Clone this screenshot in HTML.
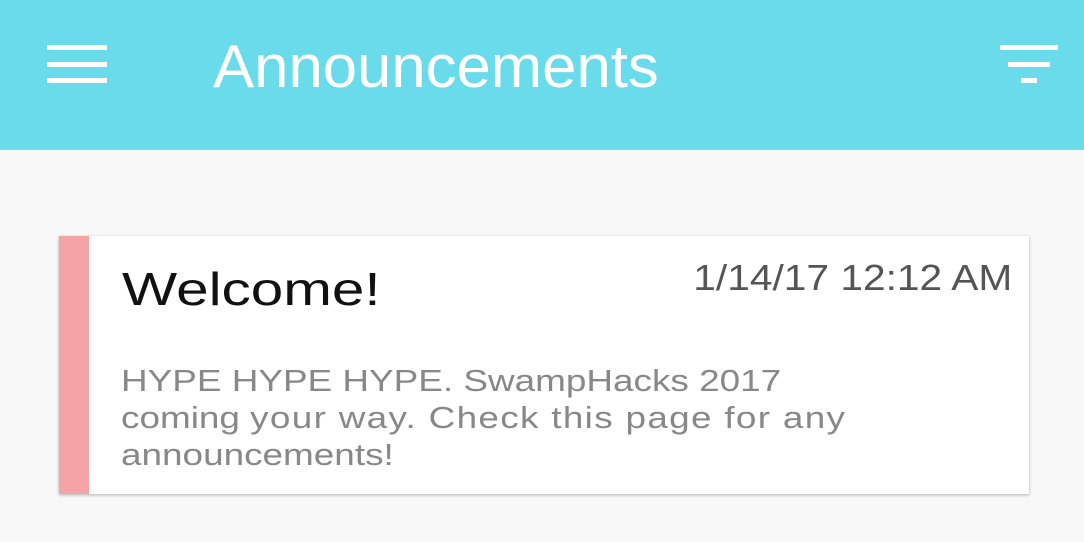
<!DOCTYPE html>
<html><head><style>
body{margin:0;width:1084px;height:542px;background:#f8f8f8;font-family:"Liberation Sans",sans-serif;position:relative;overflow:hidden}
.hd{position:absolute;left:0;top:0;width:1084px;height:150px;background:#69dbea}
.b{position:absolute;background:#fff;height:5px}
.t{position:absolute;left:213px;top:32px;font-size:60px;color:#fff;line-height:70px;transform:scaleX(1.028);transform-origin:left}
.card{position:absolute;left:59px;top:236px;width:970px;height:258px;background:#fff;box-shadow:0 1px 3px rgba(0,0,0,.3)}
.stripe{position:absolute;left:0;top:0;width:30px;height:100%;background:#f5a3a6}
.w{position:absolute;left:63px;top:25px;font-size:46px;color:#111;line-height:56px;transform:scaleX(1.27);transform-origin:left}
.d{position:absolute;right:17px;top:20px;font-size:36px;color:#555;line-height:44px;transform:scaleX(1.13);transform-origin:right}
.p{position:absolute;left:62px;top:126px;width:820px;font-size:31px;color:#888;line-height:37px;white-space:nowrap;transform:scaleX(1.19);transform-origin:left}
</style></head><body>
<div class="hd">
<div class="b" style="left:47px;top:45px;width:60px"></div>
<div class="b" style="left:47px;top:62px;width:60px"></div>
<div class="b" style="left:47px;top:78px;width:60px"></div>
<div class="t">Announcements</div>
<div class="b" style="left:1000px;top:45px;width:58px"></div>
<div class="b" style="left:1008px;top:62px;width:42px"></div>
<div class="b" style="left:1021px;top:78px;width:16px"></div>
</div>
<div class="card"><div class="stripe"></div>
<div class="w">Welcome!</div>
<div class="d">1/14/17 12:12 AM</div>
<div class="p">HYPE HYPE HYPE. SwampHacks 2017<br>coming <span style="letter-spacing:1.1px">your way. Check this page for any</span><br>announcements!</div>
</div>
</body></html>
